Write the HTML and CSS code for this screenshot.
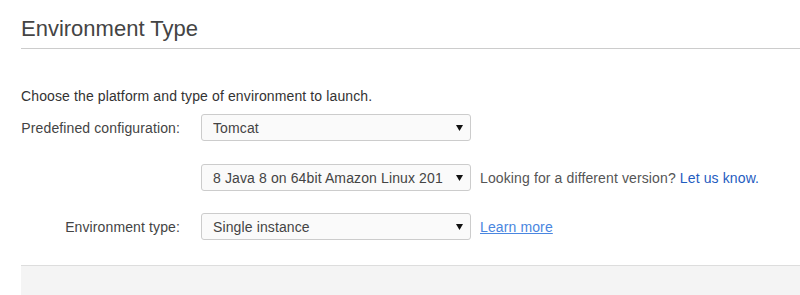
FILE: index.html
```html
<!DOCTYPE html>
<html>
<head>
<meta charset="utf-8">
<link rel="stylesheet" href="styles.css">
</head>
<body>
<div class="page">
  <h1 class="title">Environment Type</h1>
  <p class="intro">Choose the platform and type of environment to launch.</p>
  <div class="form">
    <div class="row">
      <label class="label">Predefined configuration:</label>
      <div class="select"><span class="value">Tomcat</span><svg class="arrow" width="7" height="6" viewBox="0 0 7 6"><polygon points="0,0 7,0 3.5,6" fill="#111"/></svg></div>
    </div>
    <div class="row">
      <label class="label"></label>
      <div class="select"><span class="value">8 Java 8 on 64bit Amazon Linux 201</span><svg class="arrow" width="7" height="6" viewBox="0 0 7 6"><polygon points="0,0 7,0 3.5,6" fill="#111"/></svg></div>
      <span class="note">Looking for a different version? <a class="link" href="#">Let us know.</a></span>
    </div>
    <div class="row">
      <label class="label">Environment type:</label>
      <div class="select"><span class="value">Single instance</span><svg class="arrow" width="7" height="6" viewBox="0 0 7 6"><polygon points="0,0 7,0 3.5,6" fill="#111"/></svg></div>
      <a class="note learn" href="#">Learn more</a>
    </div>
  </div>
  <div class="footer"></div>
</div>
</body>
</html>
```
FILE: styles.css
```css
html, body {
  margin: 0;
  padding: 0;
  background: #fff;
}
body {
  font-family: "Liberation Sans", Arial, sans-serif;
  color: #444;
  font-size: 14px;
  letter-spacing: 0.12px;
}
.page {
  padding-left: 21px;
  padding-top: 16px;
}
.title {
  margin: 0;
  font-size: 22px;
  font-weight: normal;
  line-height: 25px;
  letter-spacing: 0;
  color: #444;
  padding-bottom: 7px;
  border-bottom: 1px solid #ccc;
}
.intro {
  margin: 38px 0 0 0;
  line-height: 18px;
  color: #333;
}
.form {
  margin-top: 9px;
  display: flex;
  flex-direction: column;
  gap: 22px;
}
.row {
  display: flex;
  align-items: center;
  height: 27px;
}
.row:nth-child(2) {
  margin-top: 1px;
}
.label {
  width: 159px;
  margin-right: 21px;
  text-align: right;
  color: #444;
}
.select {
  box-sizing: border-box;
  width: 270px;
  height: 27px;
  border: 1px solid #ccc;
  border-radius: 3px;
  background: #fafafa;
  display: flex;
  align-items: center;
  padding: 0 7px 0 11px;
  color: #444;
}
.value {
  flex: 1;
  overflow: hidden;
  white-space: nowrap;
}
.arrow {
  flex: none;
  margin-left: 6px;
}
.note {
  margin-left: 9px;
  color: #555;
}
.link {
  color: #1f5cbf;
  text-decoration: none;
}
.learn {
  color: #4a86e0;
  text-decoration: underline;
}
.footer {
  margin-top: 25px;
  border-top: 1px solid #ddd;
  background: #f4f4f4;
  height: 40px;
}
```
